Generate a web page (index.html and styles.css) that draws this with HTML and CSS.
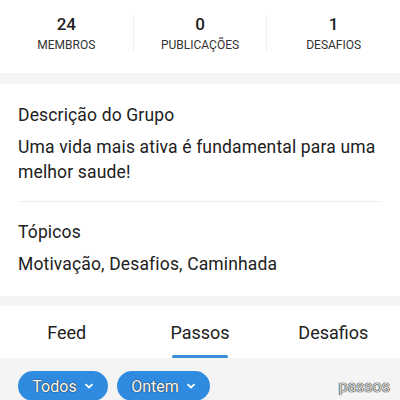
FILE: index.html
```html
<!DOCTYPE html>
<html lang="pt">
<head>
  <meta charset="UTF-8">
  <meta name="viewport" content="width=device-width, initial-scale=1.0">
  <title>Grupo</title>
  <link rel="stylesheet" href="styles.css">
</head>
<body>

  <!-- Group counters -->
  <div class="stats">
    <div class="stat">
      <span class="stat-num">24</span>
      <span class="stat-label">MEMBROS</span>
    </div>
    <div class="stat">
      <span class="stat-num">0</span>
      <span class="stat-label">PUBLICAÇÕES</span>
    </div>
    <div class="stat">
      <span class="stat-num">1</span>
      <span class="stat-label">DESAFIOS</span>
    </div>
  </div>

  <!-- Group info -->
  <div class="info">
    <div class="info-block">
      <h2>Descrição do Grupo</h2>
      <p>Uma vida mais ativa é fundamental para uma melhor saude!</p>
    </div>
    <div class="info-block">
      <h2>Tópicos</h2>
      <p>Motivação, Desafios, Caminhada</p>
    </div>
  </div>

  <!-- Tabs -->
  <div class="tabs">
    <div class="tab">Feed</div>
    <div class="tab active">Passos</div>
    <div class="tab">Desafios</div>
  </div>

  <!-- Filters -->
  <div class="filters">
    <button class="pill pill-todos">Todos
      <svg width="10" height="6" viewBox="0 0 10 6"><path d="M1.5 1.2l3.5 3.3 3.5-3.3" fill="none" stroke="#fff" stroke-width="1.8"/></svg>
    </button>
    <button class="pill pill-ontem">Ontem
      <svg width="10" height="6" viewBox="0 0 10 6"><path d="M1.5 1.2l3.5 3.3 3.5-3.3" fill="none" stroke="#fff" stroke-width="1.8"/></svg>
    </button>
    <span class="unit">passos</span>
  </div>

</body>
</html>
```

FILE: styles.css
```css
body {
  margin: 0;
  font-family: Roboto, "Noto Sans", sans-serif;
  background-color: #f4f4f4;
  color: #212121;
}
.stats {
  display: flex;
  background-color: #fff;
  height: 73px;
  align-items: flex-start;
  padding-top: 14px;
  box-sizing: border-box;
}
.stat {
  flex: 1;
  display: flex;
  flex-direction: column;
  align-items: center;
  height: 37px;
  border-left: 1px solid #eee;
}
.stat:first-child {
  border-left: none;
}
.stat-num {
  font-size: 17px;
  font-weight: 500;
  line-height: 20px;
}
.stat-label {
  font-size: 12px;
  line-height: 22px;
  color: #333;
}
.info {
  margin-top: 11px;
  background-color: #fff;
  padding: 0 18px;
}
.info-block {
  padding: 19px 0 16px;
}
.info-block + .info-block {
  border-top: 1px solid #eee;
  padding: 18px 0 19px;
}
.info-block h2 {
  margin: 0 0 7px;
  font-size: 17.5px;
  font-weight: 400;
  line-height: 25px;
  letter-spacing: 0.15px;
}
.info-block p {
  margin: 0;
  font-size: 17.5px;
  line-height: 25px;
  letter-spacing: 0.15px;
}
.tabs {
  display: flex;
  margin-top: 10px;
  background-color: #fff;
  height: 52px;
}
.tab {
  flex: 1;
  text-align: center;
  font-size: 18px;
  line-height: 50px;
  padding-top: 2px;
  position: relative;
}
.tab.active::after {
  content: "";
  position: absolute;
  left: 50%;
  bottom: 0;
  width: 56px;
  margin-left: -28px;
  height: 3px;
  background-color: #3a8fdc;
  border-radius: 2px;
}
.filters {
  display: flex;
  align-items: center;
  gap: 9px;
  padding: 13px 10px 0 18px;
}
.pill {
  display: flex;
  align-items: center;
  justify-content: center;
  gap: 7px;
  height: 30px;
  padding: 0;
  border: none;
  border-radius: 15px;
  background-color: #2f8be0;
  color: #fff;
  font-family: Roboto, sans-serif;
  font-size: 16px;
  text-shadow: 0 0 1px #222, 0 0 1px #222;
}
.pill-todos {
  width: 90px;
}
.pill-ontem {
  width: 93px;
}
.unit {
  margin-left: auto;
  font-size: 16px;
  color: #d8d8d8;
  text-shadow: 0 0 1px #111, 0 0 1px #111;
}
```
